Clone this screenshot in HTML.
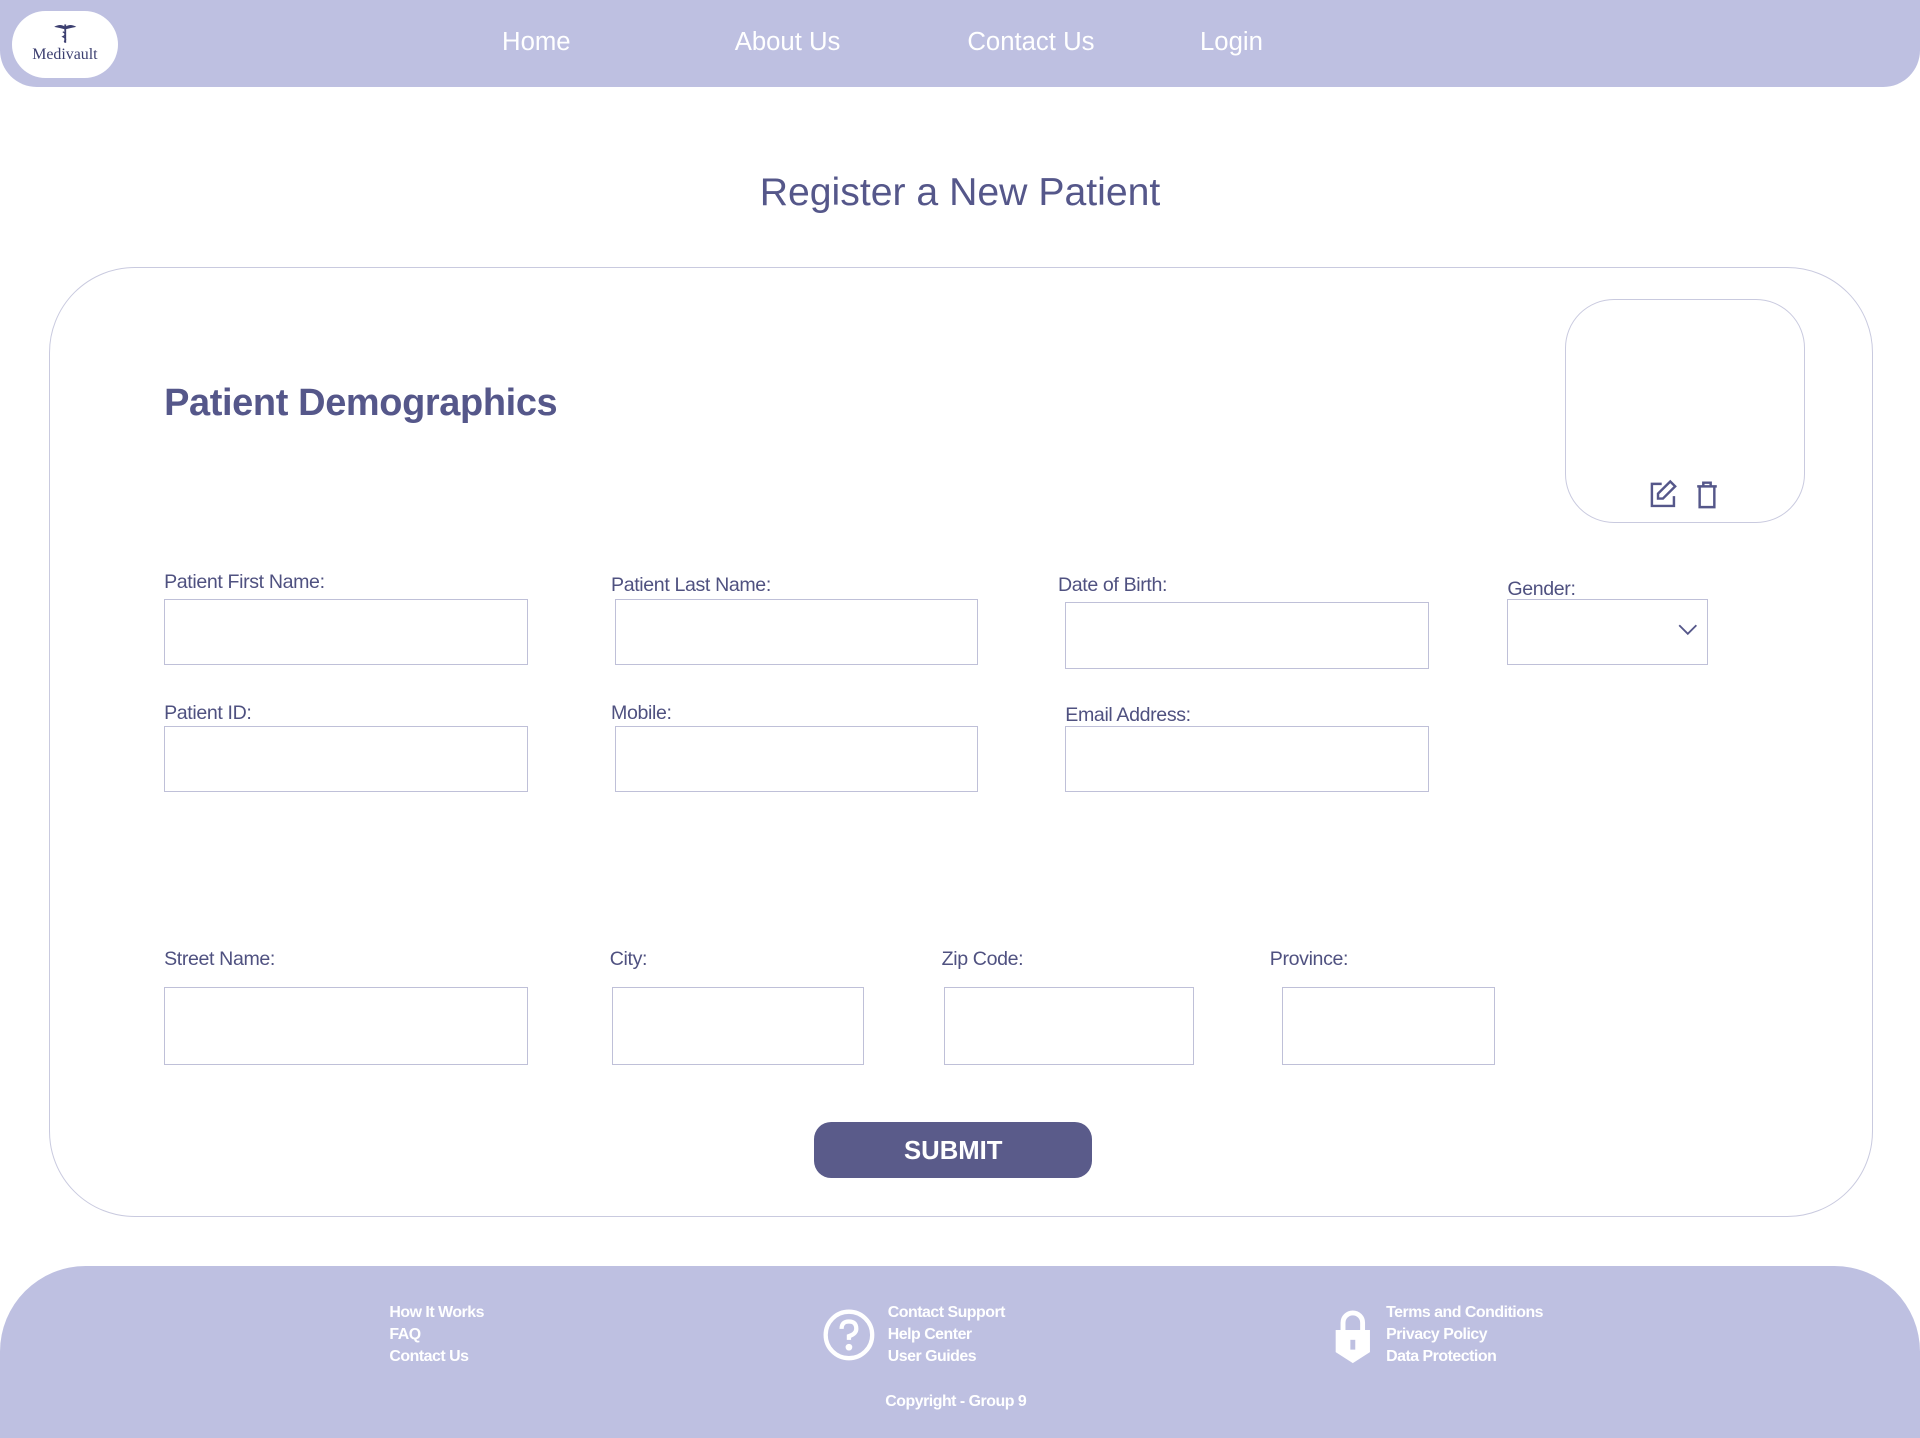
<!DOCTYPE html>
<html><head><meta charset="utf-8"><style>
html,body{margin:0;padding:0;background:#fff;overflow:hidden}
#w{zoom:1.22449;width:1568px;height:1174px;position:relative;font-family:"Liberation Sans",sans-serif;color:#55578a}
.a{position:absolute}
.nav{left:0;top:0;width:1568px;height:71px;background:#bec0e1;border-radius:0 0 30px 30px}
.nav a{position:absolute;top:23px;color:#fff;font-size:21px;text-decoration:none}
.logo{left:10px;top:9px;width:86px;height:55px;background:#fff;border-radius:28px;text-align:center}
.card{left:40px;top:218px;width:1490px;height:776px;border:1px solid #c9cadf;border-radius:70px;box-sizing:border-box}
.lbl{font-size:16px;color:#4f5180;letter-spacing:-0.3px;margin-top:1px}
.in{border:1px solid #bfc0d8;box-sizing:border-box;background:#fff}
.ft{left:0;top:1034px;width:1568px;height:140px;background:#bec0e1;border-radius:70px 70px 0 0}
.ft div{color:#fff;font-size:13px;font-weight:bold;line-height:18px;letter-spacing:-0.4px;margin-top:1px}
</style></head><body><div id="w">
<div class="a nav">
 <div class="a logo">
  <svg width="20" height="18" viewBox="0 0 20 18" style="margin-top:9px"><path d="M1 4 Q6 1 10 4 Q14 1 19 4 Q14 5 10 6 Q6 5 1 4Z" fill="#3c3f70"/><line x1="10" y1="2" x2="10" y2="17" stroke="#3c3f70" stroke-width="1.5"/><path d="M8 8 Q12 10 8 12 Q12 14 9 16" fill="none" stroke="#3c3f70"/></svg>
  <div style="font-family:'Liberation Serif',serif;font-size:13px;color:#3c3f70;margin-top:-3px">Medivault</div>
 </div>
 <a style="left:410px">Home</a><a style="left:600px">About Us</a><a style="left:790px">Contact Us</a><a style="left:980px">Login</a>
</div>
<div class="a" style="left:0;width:1568px;top:140px;text-align:center;font-size:32px;color:#55578a">Register a New Patient</div>
<div class="a card"></div>
<div class="a" style="left:134px;top:312px;font-size:31px;font-weight:bold;letter-spacing:-0.3px">Patient Demographics</div>
<div class="a" style="left:1278px;top:244px;width:196px;height:183px;border:1px solid #c9cadf;border-radius:40px;box-sizing:border-box"></div>
<svg class="a" style="left:1345px;top:391px" width="64" height="26" viewBox="0 0 64 26" fill="none" stroke="#55578a" stroke-width="2"><path d="M12 4H4v18h18v-8"/><path d="M19 2l4 4-10 10H9v-4z"/><path d="M41 6h16M46 6V3h6v3M43 6v17h12V6"/></svg>
<div class="a lbl" style="left:134px;top:465px">Patient First Name:</div><div class="a in" style="left:134px;top:489px;width:297px;height:54px"></div>
<div class="a lbl" style="left:499px;top:468px">Patient Last Name:</div><div class="a in" style="left:502px;top:489px;width:297px;height:54px"></div>
<div class="a lbl" style="left:864px;top:468px">Date of Birth:</div><div class="a in" style="left:870px;top:492px;width:297px;height:54px"></div>
<div class="a lbl" style="left:1231px;top:471px">Gender:</div><div class="a in" style="left:1231px;top:489px;width:164px;height:54px"></div>
<svg class="a" style="left:1370px;top:510px" width="16" height="10"><path d="M1 1l7 7 7-7" fill="none" stroke="#55578a" stroke-width="1.5"/></svg>
<div class="a lbl" style="left:134px;top:572px">Patient ID:</div><div class="a in" style="left:134px;top:593px;width:297px;height:54px"></div>
<div class="a lbl" style="left:499px;top:572px">Mobile:</div><div class="a in" style="left:502px;top:593px;width:297px;height:54px"></div>
<div class="a lbl" style="left:870px;top:574px">Email Address:</div><div class="a in" style="left:870px;top:593px;width:297px;height:54px"></div>
<div class="a lbl" style="left:134px;top:773px">Street Name:</div><div class="a in" style="left:134px;top:806px;width:297px;height:64px"></div>
<div class="a lbl" style="left:498px;top:773px">City:</div><div class="a in" style="left:500px;top:806px;width:206px;height:64px"></div>
<div class="a lbl" style="left:769px;top:773px">Zip Code:</div><div class="a in" style="left:771px;top:806px;width:204px;height:64px"></div>
<div class="a lbl" style="left:1037px;top:773px">Province:</div><div class="a in" style="left:1047px;top:806px;width:174px;height:64px"></div>
<div class="a" style="left:665px;top:916px;width:227px;height:46px;background:#5a5b8a;border-radius:14px;color:#fff;font-size:21px;font-weight:bold;text-align:center;line-height:48px">SUBMIT</div>
<div class="a ft">
 <div class="a" style="left:318px;top:28px">How It Works<br>FAQ<br>Contact Us</div>
 <svg class="a" style="left:671px;top:34px" width="44" height="44" viewBox="0 0 44 44" fill="none" stroke="#fff" stroke-width="3.5"><circle cx="22" cy="22" r="19"/><path d="M16 17q0-6 6-6t6 6q0 4-6 6v3" /><circle cx="22" cy="32" r="1" fill="#fff"/></svg>
 <div class="a" style="left:725px;top:28px">Contact Support<br>Help Center<br>User Guides</div>
 <svg class="a" style="left:1088px;top:34px" width="34" height="46" viewBox="0 0 34 46"><path d="M9 18V12a8 8 0 0 1 16 0v6" fill="none" stroke="#fff" stroke-width="4"/><path d="M3 18h28v18l-14 9-14-9z" fill="#fff"/><rect x="15" y="26" width="4" height="8" fill="#bec0e1"/></svg>
 <div class="a" style="left:1132px;top:28px">Terms and Conditions<br>Privacy Policy<br>Data Protection</div>
 <div class="a" style="left:723px;top:101px">Copyright - Group 9</div>
</div>
</div></body></html>
